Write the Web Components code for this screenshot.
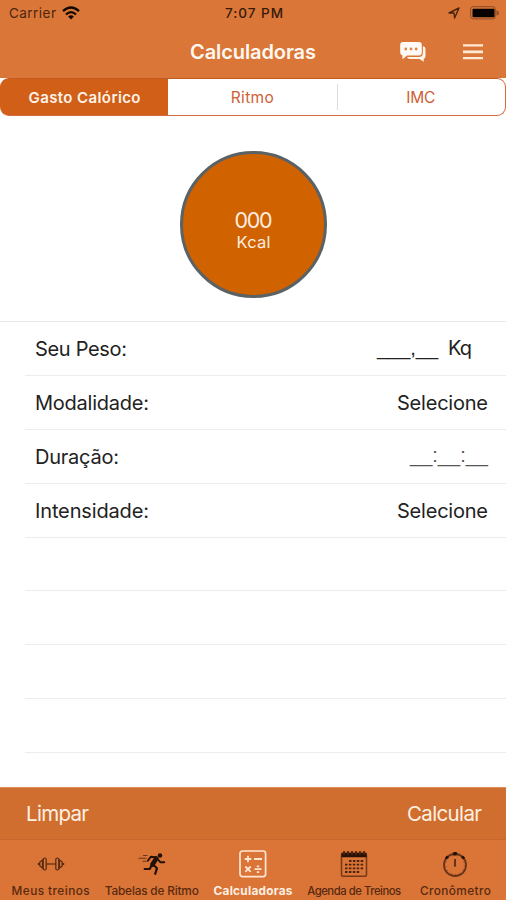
<!DOCTYPE html>
<html lang="pt">
<head>
<meta charset="utf-8">
<title>Calculadoras</title>
<style>
html,body{margin:0;padding:0;background:#fff}
body{font-family:Inter,"Liberation Sans",sans-serif;width:506px;height:900px;overflow:hidden}
</style>
</head>
<body>
<calc-app></calc-app>
<script>
function define(name, html, setup) {
  const t = document.createElement('template');
  t.innerHTML = html;
  customElements.define(name, class extends HTMLElement {
    connectedCallback() {
      if (this.shadowRoot) return;
      this.attachShadow({mode: 'open'}).append(t.content.cloneNode(true));
      if (setup) setup(this, this.shadowRoot);
    }
  });
}

/* Text label tracked so that it spans the width given in "w". */
define('fit-text', `<style>:host{display:inline-block;white-space:pre}span{display:inline-block}</style><span><slot></slot></span>`, (el, root) => {
  const s = root.querySelector('span'), w = +el.getAttribute('w');
  const n = el.textContent.length, d = (w - s.getBoundingClientRect().width) / (n - 1);
  s.style.letterSpacing = d.toFixed(3) + 'px';
  s.style.marginRight = (-d).toFixed(3) + 'px';
});

define('status-bar', `<style>
:host{display:grid;grid-template-columns:1fr auto 1fr;align-items:center;height:26px;padding:0 7px 0 9px;font-size:13.5px;color:#4a2713}
.l{display:flex;align-items:center;gap:6px}.r{display:flex;align-items:center;justify-content:flex-end;gap:10px}
.t{color:#351a0c;font-weight:500}svg{display:block}
</style>
<div class="l"><fit-text w="47">Carrier</fit-text>
<svg width="18" height="14" viewBox="0 0 18 14" fill="none" stroke="#120803" stroke-width="2.3"><path d="M1 5.2Q9-2.2 17 5.2M4 8.5Q9 3.7 14 8.5"/><path d="M9 13.4 6.1 10.5Q9 8 11.9 10.5Z" fill="#120803" stroke="none"/></svg></div>
<div class="t"><fit-text w="58">7:07 PM</fit-text></div>
<div class="r"><svg width="12" height="12" viewBox="0 0 12 12" fill="none" stroke="#482410" stroke-width="1.4" stroke-linejoin="round"><path d="M1 6 11 1 6.6 11 6 6Z"/></svg>
<svg width="29" height="14" viewBox="0 0 29 14"><rect x=".7" y=".7" width="24.6" height="12.2" rx="2.5" fill="none" stroke="#8e4b25"/><rect x="2.5" y="2.7" width="22" height="8.5" rx="1" fill="#050200"/><path d="M26.5 4.2Q29 5 29 7T26.5 9.7Z" fill="#8e4b25"/></svg></div>`);

define('nav-bar', `<style>
:host{display:grid;grid-template-columns:1fr auto 1fr;align-items:center;height:52px;color:#fff8f1;font-size:20px;font-weight:600}
.r{display:flex;align-items:center;justify-content:flex-end;gap:37px;padding-right:23px}svg{display:block}
</style><div></div><fit-text w="126">Calculadoras</fit-text>
<div class="r"><svg width="26" height="20" viewBox="0 0 26 20"><path d="M23 4.2Q25.5 4.5 25.5 7V14Q25.5 16.5 23.7 16.7V19.8L19.5 16.9H10Q7.8 16.9 7 15H19Q22.6 15 22.8 11.5Z" fill="#fff5eb"/><path d="M3 0H19Q21.8 0 21.8 3V10.5Q21.8 13.4 19 13.4H7L2.5 17.3V13.4Q.2 13 .2 10.5V3Q.2 0 3 0Z" fill="#fffaf5"/><g fill="#dc8650"><circle cx="5.8" cy="7" r="1.4"/><circle cx="11" cy="7" r="1.4"/><circle cx="16.2" cy="7" r="1.4"/></g></svg>
<svg width="20" height="16" viewBox="0 0 20 16" fill="#ffead6"><path d="M0 .3H20V2.6H0ZM0 6.4H20V9.2H0ZM0 13H20V15.2H0Z"/></svg></div>`);

define('segmented-control', `<style>
:host{display:grid;grid-template-columns:167px 1fr 1fr;height:38px;box-sizing:border-box;border:1px solid #d4693f;border-top:1.5px solid #c55a1f;border-left-color:#d15f18;border-radius:9px;overflow:hidden;background:linear-gradient(90deg,#d15f18 167px,#fff 167px);font-size:15.5px;color:#cd6035}
div{display:flex;align-items:center;justify-content:center;position:relative}
.on{color:#fff3e8;font-weight:600;font-size:15px}
.last::before{content:"";position:absolute;left:0;top:5px;bottom:5px;width:1px;background:#ddd}
</style><div class="on"><fit-text w="112">Gasto Calórico</fit-text></div><div><fit-text w="43">Ritmo</fit-text></div><div class="last"><fit-text w="29">IMC</fit-text></div>`);

define('kcal-dial', `<style>
:host{display:flex;justify-content:center;height:206px;box-sizing:border-box;padding-top:35px;border-bottom:1px solid #e8e8e8}
div{display:flex;flex-direction:column;align-items:center;box-sizing:border-box;width:147px;height:147px;margin-left:1px;border-radius:50%;border:3px solid #5b6265;background:#d06200;color:#ffede0;padding-top:53px}
.n{font-size:21.5px;line-height:26px}.k{font-size:16.5px;line-height:19px}
</style><div><fit-text class="n" w="38">000</fit-text><fit-text class="k" w="34">Kcal</fit-text></div>`);

define('form-row', `<style>
:host{display:flex;box-sizing:border-box;height:53.9px;margin-left:25px;padding:2px 18px 0 10px;border-bottom:1.5px solid #ececec;align-items:center;justify-content:space-between;font-size:20px;color:#222}
</style><slot name="label"></slot><slot name="value"></slot>`);

/* Entry mask whose blanks join into one rule. */
define('blank-value', `<style>
:host{display:flex;align-items:flex-end;height:26px;font-family:"Liberation Sans",sans-serif}
</style><slot></slot>`);

define('action-bar', `<style>
:host{display:flex;box-sizing:border-box;height:53px;padding:0 24px 0 26px;justify-content:space-between;align-items:center;background:#d06e2f;border-top:1px solid #dd8a58;border-bottom:1px solid #c6672d;color:#fff0e3;font-size:20.5px}
</style><fit-text w="63">Limpar</fit-text><fit-text w="75">Calcular</fit-text>`);

define('tab-item', `<style>
:host{display:flex;flex-direction:column;align-items:center;color:#59290f;font-size:11.8px;font-weight:500}
:host([active]){color:#fff0e4;font-weight:700}
.i{display:flex;height:28px;align-items:center}.t{line-height:16px;margin-top:5px}
</style><div class="i"><slot name="icon"></slot></div><div class="t"><slot></slot></div>`);

define('tab-bar', `<style>
:host{display:grid;grid-template-columns:repeat(5,1fr);height:60px;box-sizing:border-box;padding-top:10px;background:#da7537}
svg{display:block}
</style>
<tab-item><svg slot="icon" width="28" height="14" viewBox="0 0 28 14" fill="none" stroke="#552a12" stroke-width="1.2"><path d="M9 7H19"/><rect x="6.2" y="1" width="3" height="12" rx="1.5"/><rect x="18.8" y="1" width="3" height="12" rx="1.5"/><path d="M5.5 3 2.8 5V9L5.5 11ZM22.5 3 25.2 5V9L22.5 11Z"/><path d="M.8 7H3M25 7H27.2" stroke-width="1.8"/></svg><fit-text w="78">Meus treinos</fit-text></tab-item>
<tab-item><svg slot="icon" width="28" height="24" viewBox="0 0 28 24" fill="none" stroke="#251006" stroke-linecap="round" stroke-linejoin="round"><circle cx="22" cy="3.5" r="2.2" fill="#251006" stroke="none"/><path d="M18.3 6.5 14.5 12.5" stroke-width="4.6"/><path d="M17.5 5.3 12.8 4.7 9.8 8.7M20 7.5 22.3 10.2H26.3" stroke-width="1.9"/><path d="M15.5 13 19 16.2 17.2 21.8M13.7 13.3 11.7 17H6.7" stroke-width="2.2"/><path d="M1 6.3H8M5 9.3H8M5.5 3.5H9" stroke-width="1.1" stroke="#66351b"/></svg><fit-text w="94">Tabelas de Ritmo</fit-text></tab-item>
<tab-item active><svg slot="icon" width="28" height="28" viewBox="0 0 28 28" fill="none" stroke="#ffe6d3" stroke-width="1.7"><rect x="1" y="1" width="25.6" height="25.6" rx="2.5"/><path d="M5.7 9H12.3M9 5.7V12.3M15 9H23M6.3 16.5 11.7 21.9M11.7 16.5 6.3 21.9M15.5 19.2H22.5" stroke-width="1.8"/><path d="M19 15.4V17.2M19 21.2V23" stroke-width="2.4"/></svg><fit-text w="79">Calculadoras</fit-text></tab-item>
<tab-item><svg slot="icon" width="28" height="28" viewBox="0 0 28 28" fill="none" stroke="#4a220e"><rect x="1.5" y="3.5" width="25" height="22.8" rx="1.5" stroke-width="1.5" stroke="#743a18"/><path d="M1.5 5H26.5" stroke-width="4.5" stroke="#281107"/><path d="M4 1V5M8 1V5M12 1V5M16 1V5M20 1V5M24 1V5" stroke-width="1.7"/><g stroke-width="1.8" stroke-dasharray="2.5 1.4"><path d="M9 11H24M5 14.7H24M5 18.3H24M5 22H20"/></g></svg><fit-text w="94" style="font-size:11.3px">Agenda de Treinos</fit-text></tab-item>
<tab-item><svg slot="icon" width="28" height="28" viewBox="0 0 28 28" fill="none" stroke="#67341a"><circle cx="14" cy="15" r="11" stroke-width="1.8"/><circle cx="14" cy="15" r="9.4" stroke-width=".9" stroke-dasharray=".8 3.8"/><path d="M14 2V5.5M4.8 8.6 7 6.4M23.2 8.6 21 6.4" stroke="#251007" stroke-width="2.6"/><path d="M11.8 3.5H16.2" stroke="#251007" stroke-width="2"/><path d="M14 9V15.5" stroke-width="2"/><circle cx="14" cy="15.5" r="1.2" fill="#67341a" stroke="none"/></svg><fit-text w="71">Cronômetro</fit-text></tab-item>`);

define('calc-app', `<style>
:host{display:flex;flex-direction:column;width:506px;height:900px;background:#fff}
header{background:#da7637;height:78px}
main{flex:1;min-height:0;overflow:hidden}
.mask{padding-bottom:2px}.time{padding-bottom:3px}
.kg{font-family:Inter,sans-serif;margin:0 16px 2px 10px;line-height:24px}.d{color:#555}
</style>
<header><status-bar></status-bar><nav-bar></nav-bar></header>
<segmented-control></segmented-control>
<main>
<kcal-dial></kcal-dial>
<form-row><fit-text slot="label" w="92">Seu Peso:</fit-text><blank-value slot="value"><fit-text class="mask" w="61">___,__</fit-text><fit-text class="kg" w="24">Kq</fit-text></blank-value></form-row>
<form-row><fit-text slot="label" w="114">Modalidade:</fit-text><fit-text slot="value" w="91">Selecione</fit-text></form-row>
<form-row><fit-text slot="label" w="84">Duração:</fit-text><blank-value slot="value" class="d"><fit-text class="time" w="78">__:__:__</fit-text></blank-value></form-row>
<form-row><fit-text slot="label" w="114">Intensidade:</fit-text><fit-text slot="value" w="91">Selecione</fit-text></form-row>
<form-row></form-row><form-row></form-row><form-row></form-row><form-row></form-row>
</main>
<action-bar></action-bar>
<tab-bar></tab-bar>`);
</script>
</body>
</html>
